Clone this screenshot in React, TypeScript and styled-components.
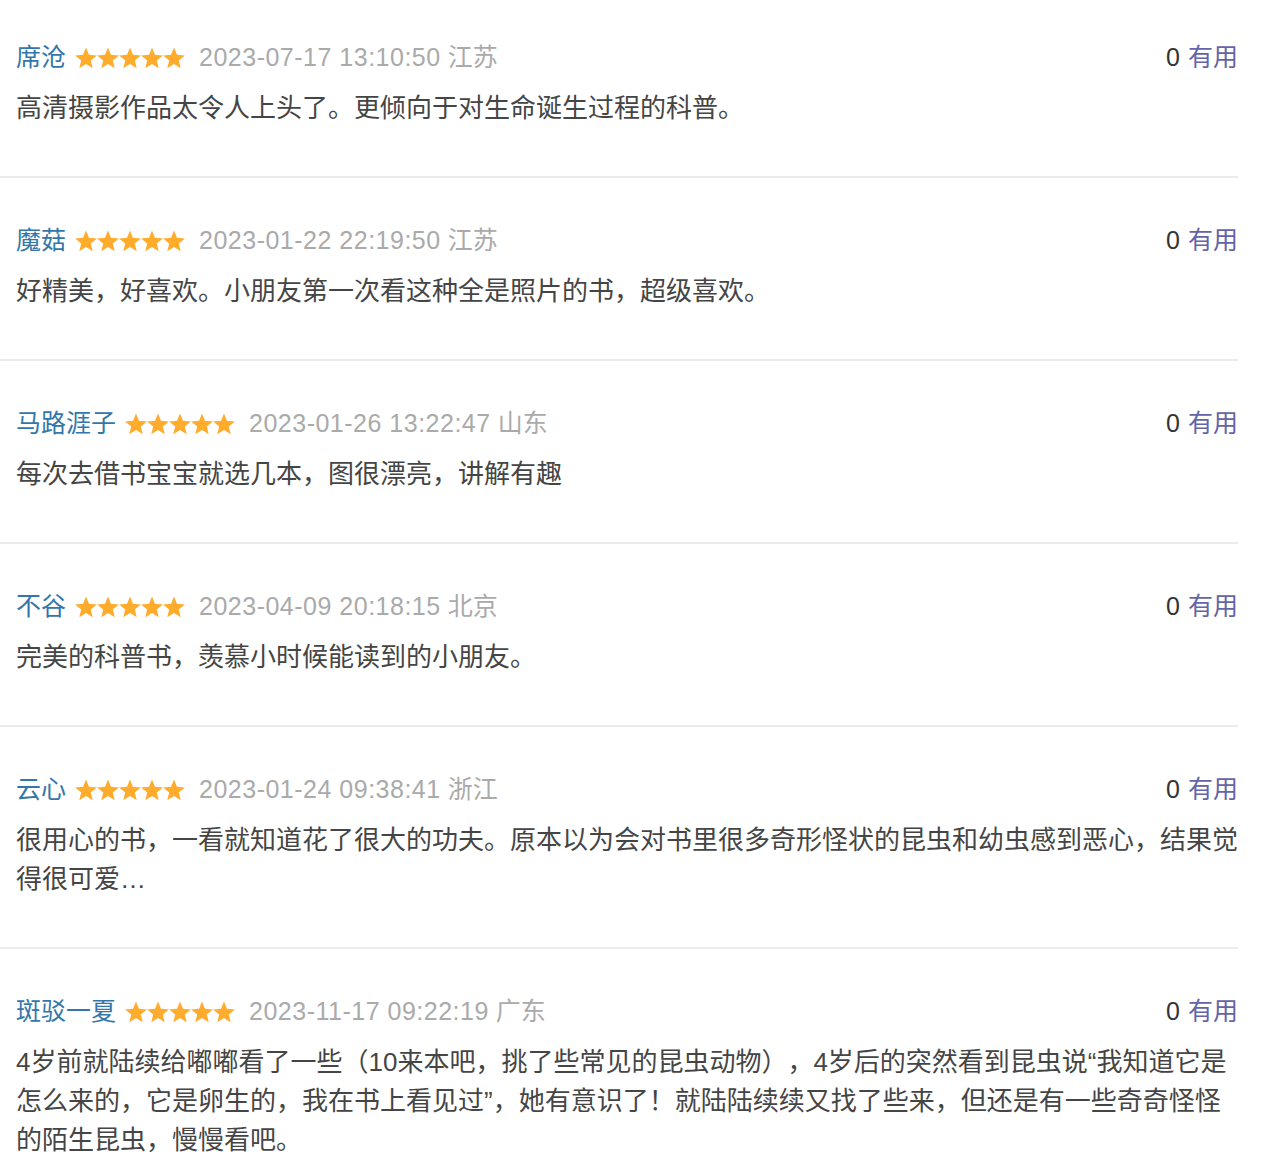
import React from "react";
import styled, { createGlobalStyle } from "styled-components";

const GlobalStyle = createGlobalStyle`
  html, body {
    margin: 0;
    padding: 0;
    background: #ffffff;
  }
  body {
    font-family: "Liberation Sans", "Noto Sans CJK SC", sans-serif;
  }
`;

const List = styled.div`
  width: 1238px;
  display: flex;
  flex-direction: column;
`;

const Item = styled.div<{ $first?: boolean }>`
  padding: ${(p) => (p.$first ? "38px" : "43px")} 0 48px 16px;
  border-bottom: 2px solid #ebebeb;
  display: flex;
  flex-direction: column;
  gap: 12px;
`;

const Header = styled.div`
  display: flex;
  align-items: center;
  height: 39px;
  font-size: 25px;
  line-height: 39px;
`;

const Name = styled.span`
  color: #3377aa;
  margin-right: 9px;
`;

const Stars = styled.span`
  display: inline-flex;
  align-items: center;
  margin-right: 14px;
`;

const DateText = styled.span`
  color: #aaaaaa;
  letter-spacing: 0.5px;
`;

const Region = styled.span`
  color: #aaaaaa;
  margin-left: 7px;
`;

const Vote = styled.span`
  margin-left: auto;
  color: #333333;
  display: inline-flex;
  gap: 8px;
`;

const Useful = styled.span`
  color: #6464a8;
`;

const Content = styled.p`
  margin: 0 -4px 0 0;
  font-size: 26px;
  line-height: 39px;
  color: #454545;
  text-spacing-trim: space-all;
`;

const Star = () => (
  <svg width="22" height="22" viewBox="0 0 24 24">
    <path
      d="M12 0.5L15.23 8.55L23.89 9.14L17.23 14.7L19.35 23.11L12 18.5L4.65 23.11L6.77 14.7L0.11 9.14L8.77 8.55Z"
      fill="#ffac2d"
    />
  </svg>
);

type Comment = {
  name: string;
  date: string;
  region: string;
  text: string;
};

const comments: Comment[] = [
  {
    name: "席沧",
    date: "2023-07-17 13:10:50",
    region: "江苏",
    text: "高清摄影作品太令人上头了。更倾向于对生命诞生过程的科普。",
  },
  {
    name: "魔菇",
    date: "2023-01-22 22:19:50",
    region: "江苏",
    text: "好精美，好喜欢。小朋友第一次看这种全是照片的书，超级喜欢。",
  },
  {
    name: "马路涯子",
    date: "2023-01-26 13:22:47",
    region: "山东",
    text: "每次去借书宝宝就选几本，图很漂亮，讲解有趣",
  },
  {
    name: "不谷",
    date: "2023-04-09 20:18:15",
    region: "北京",
    text: "完美的科普书，羡慕小时候能读到的小朋友。",
  },
  {
    name: "云心",
    date: "2023-01-24 09:38:41",
    region: "浙江",
    text: "很用心的书，一看就知道花了很大的功夫。原本以为会对书里很多奇形怪状的昆虫和幼虫感到恶心，结果觉得很可爱…",
  },
  {
    name: "斑驳一夏",
    date: "2023-11-17 09:22:19",
    region: "广东",
    text: "4岁前就陆续给嘟嘟看了一些（10来本吧，挑了些常见的昆虫动物），4岁后的突然看到昆虫说“我知道它是怎么来的，它是卵生的，我在书上看见过”，她有意识了！就陆陆续续又找了些来，但还是有一些奇奇怪怪的陌生昆虫，慢慢看吧。",
  },
];

export default function App() {
  return (
    <>
      <GlobalStyle />
      <List>
        {comments.map((c, i) => (
          <Item key={i} $first={i === 0}>
            <Header>
              <Name>{c.name}</Name>
              <Stars>
                {[0, 1, 2, 3, 4].map((s) => (
                  <Star key={s} />
                ))}
              </Stars>
              <DateText>{c.date}</DateText>
              <Region>{c.region}</Region>
              <Vote>
                <span>0</span>
                <Useful>有用</Useful>
              </Vote>
            </Header>
            <Content>{c.text}</Content>
          </Item>
        ))}
      </List>
    </>
  );
}
